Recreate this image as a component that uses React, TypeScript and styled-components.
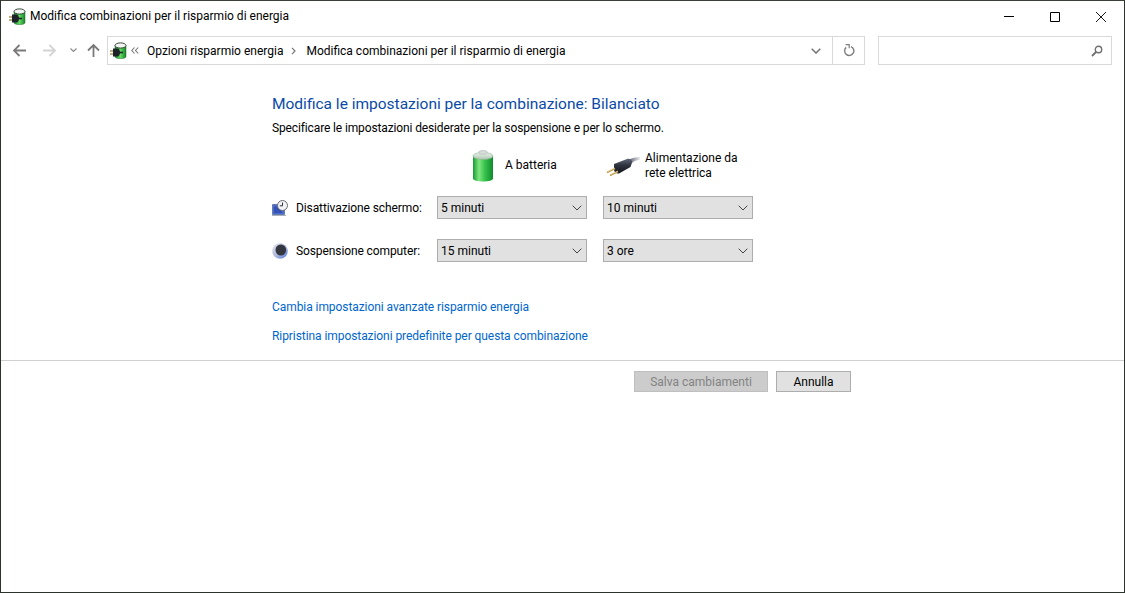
import React from 'react';
import styled, { createGlobalStyle } from 'styled-components';

const GlobalStyle = createGlobalStyle`
  html, body {
    margin: 0;
    padding: 0;
    background: #fff;
  }
  body {
    font-family: Roboto, "Open Sans", sans-serif;
    font-size: 12px;
    color: #000;
  }
`;

const Win = styled.div`
  box-sizing: border-box;
  width: 1125px;
  height: 593px;
  border: 1px solid #2c332c;
  border-top-color: #3a3f38;
  background: #fff;
  display: flex;
  flex-direction: column;
  overflow: hidden;
`;

const TitleBar = styled.div`
  height: 31px;
  display: flex;
  align-items: center;
  padding-left: 8px;
  flex-shrink: 0;
`;

const TitleText = styled.span`
  margin-left: 4px;
  padding-bottom: 2px;
  font-size: 12px;
  line-height: 16px;
  flex: 1;
`;

const WinButton = styled.div`
  width: 46px;
  height: 31px;
  display: flex;
  align-items: center;
  justify-content: center;
`;

const NavBar = styled.div`
  height: 29px;
  margin-top: 4px;
  display: flex;
  align-items: stretch;
  flex-shrink: 0;
`;

const NavButtons = styled.div`
  width: 106px;
  display: flex;
  align-items: center;
  padding-left: 12px;
  box-sizing: border-box;
`;

const NavIcon = styled.div<{ $w: number; $left?: number }>`
  width: ${(p) => p.$w}px;
  margin-left: ${(p) => p.$left ?? 0}px;
  height: 29px;
  display: flex;
  align-items: center;
  justify-content: center;
`;

const AddressBox = styled.div`
  box-sizing: border-box;
  width: 758px;
  border: 1px solid #d9d9d9;
  display: flex;
  align-items: center;
`;

const Crumbs = styled.div`
  flex: 1;
  display: flex;
  align-items: center;
  padding-left: 2px;
`;

const Crumb = styled.span<{ $left: number }>`
  margin-left: ${(p) => p.$left}px;
  font-size: 12px;
  white-space: nowrap;
`;

const CrumbMark = styled.span<{ $left: number }>`
  margin-left: ${(p) => p.$left}px;
  display: flex;
  align-items: center;
`;

const AddressAction = styled.div<{ $w: number; $line?: boolean }>`
  width: ${(p) => p.$w}px;
  height: 100%;
  display: flex;
  align-items: center;
  justify-content: center;
  border-left: ${(p) => (p.$line ? '1px solid #d9d9d9' : 'none')};
  box-sizing: border-box;
`;

const SearchBox = styled.div`
  box-sizing: border-box;
  width: 234px;
  margin-left: 13px;
  border: 1px solid #d9d9d9;
  display: flex;
  align-items: center;
  justify-content: flex-end;
  padding-right: 8px;
`;

const Content = styled.div`
  padding: 29px 0 0 271px;
  flex-shrink: 0;
`;

const Heading = styled.h1`
  margin: 0;
  font-size: 15.5px;
  font-weight: 400;
  line-height: 20px;
  color: #0a4aa8;
`;

const Lead = styled.p`
  margin: 6px 0 0;
  font-size: 12px;
  line-height: 16px;
  letter-spacing: -0.13px;
`;

const PowerGrid = styled.div`
  display: grid;
  grid-template-columns: 149px 150px 150px;
  column-gap: 16px;
  row-gap: 20px;
  margin-top: 14px;
`;

const HeadCell = styled.div<{ $pad: number; $gap: number }>`
  height: 31px;
  margin-bottom: -5px;
  display: flex;
  align-items: center;
  padding-left: ${(p) => p.$pad}px;
  gap: ${(p) => p.$gap}px;
  font-size: 12px;
  line-height: 15px;
`;

const RowLabel = styled.div`
  display: flex;
  align-items: center;
  gap: 8px;
  font-size: 12px;
  height: 23px;
  white-space: nowrap;
  letter-spacing: -0.1px;

  svg {
    flex-shrink: 0;
  }
`;

const Select = styled.div`
  box-sizing: border-box;
  height: 23px;
  background: #e1e1e1;
  border: 1px solid #adadad;
  display: flex;
  align-items: center;
  justify-content: space-between;
  padding: 0 4px 0 3px;
  font-size: 12px;
`;

const LinkList = styled.div`
  display: flex;
  flex-direction: column;
  gap: 13px;
  margin-top: 37px;
`;

const TaskLink = styled.a`
  font-size: 12px;
  line-height: 16px;
  letter-spacing: -0.07px;
  color: #0066cc;
  text-decoration: none;
`;

const Divider = styled.div`
  height: 1px;
  background: #d0d0d0;
  margin-top: 16px;
  flex-shrink: 0;
`;

const ButtonRow = styled.div`
  display: flex;
  gap: 8px;
  padding: 10px 0 0 633px;
`;

const Btn = styled.div<{ $disabled?: boolean; $w: number }>`
  box-sizing: border-box;
  width: ${(p) => p.$w}px;
  height: 21px;
  display: flex;
  align-items: center;
  justify-content: center;
  font-size: 12px;
  background: ${(p) => (p.$disabled ? '#cccccc' : '#e1e1e1')};
  border: 1px solid ${(p) => (p.$disabled ? '#bfbfbf' : '#adadad')};
  color: ${(p) => (p.$disabled ? '#838383' : '#000')};
`;

const PowerPlanIcon = ({ id }: { id: string }) => (
  <svg width="17" height="17" viewBox="0 0 17 17">
    <defs>
      <linearGradient id={id} x1="0" x2="1" y1="0" y2="0">
        <stop offset="0" stopColor="#1a8c32" />
        <stop offset="0.5" stopColor="#62d860" />
        <stop offset="1" stopColor="#148429" />
      </linearGradient>
    </defs>
    <path d="M5 3.500v11c0 1.300 2.200 2.200 5.500 2.200s5.500-.9 5.500-2.200v-11z" fill={`url(#${id})`} stroke="#2a6b33" strokeWidth=".5" />
    <ellipse cx="10.500" cy="3.500" rx="5.500" ry="2.600" fill="#f2f5f2" stroke="#38463a" />
    <path d="M0 9h4M0 12h4" stroke="#a89455" strokeWidth="1.300" />
    <path d="M3 6.500h4.200c1.700 0 2.800 1.700 2.800 4s-1.100 4-2.800 4H3z" fill="#1e2228" />
    <path d="M9.500 10.500h3.500" stroke="#1e2228" strokeWidth="1.600" />
  </svg>
);

const BatteryIcon = () => (
  <svg width="22" height="32" viewBox="0 0 22 32">
    <defs>
      <linearGradient id="bg" x1="0" x2="1" y1="0" y2="0">
        <stop offset="0" stopColor="#169a33" />
        <stop offset="0.3" stopColor="#7fe67f" />
        <stop offset="0.6" stopColor="#35c24c" />
        <stop offset="1" stopColor="#0f8a2c" />
      </linearGradient>
      <linearGradient id="bt" x1="0" x2="0" y1="0" y2="1">
        <stop offset="0" stopColor="#f2f5f2" />
        <stop offset="1" stopColor="#a9c4ad" />
      </linearGradient>
    </defs>
    <path d="M1 6v22.5c0 1.7 4.400 3 10 3s10-1.300 10-3V6z" fill="url(#bg)" />
    <ellipse cx="11" cy="6" rx="10" ry="3.600" fill="url(#bt)" stroke="#8fb495" strokeWidth=".6" />
    <path d="M7 3.200V1.600C7 1 8.800.6 11 .6s4 .4 4 1v1.600c0 .7-1.800 1.100-4 1.100s-4-.4-4-1.100z" fill="#d6dcd8" stroke="#a5aea8" strokeWidth=".5" />
  </svg>
);

const PlugIcon = () => (
  <svg width="34" height="22" viewBox="0 0 34 22">
    <defs>
      <linearGradient id="pl" x1="0" x2="0" y1="0" y2="1">
        <stop offset="0" stopColor="#606778" />
        <stop offset="0.45" stopColor="#2e323e" />
        <stop offset="1" stopColor="#14161c" />
      </linearGradient>
      <linearGradient id="cb" x1="0" x2="1" y1="0" y2="0">
        <stop offset="0" stopColor="#4c5260" />
        <stop offset="1" stopColor="#eceef0" />
      </linearGradient>
    </defs>
    <path d="M22 5c4-2 7.500-2.800 12-3v3c-4 .2-6.500 1.300-8.500 3.500z" fill="url(#cb)" />
    <path d="M8 9 21 4c3-.7 5.500.8 5 3.500L24.500 12 13 18.500c-2.500.4-4.200-.8-5-3.500z" fill="url(#pl)" />
    <path d="M9 13.500 1 17.500M12 16.500 4 20.500" stroke="#bd9a4e" strokeWidth="1.800" />
    <path d="M9 13 1.500 16.700M12 16 4.500 19.700" stroke="#f2e0a8" strokeWidth=".6" />
  </svg>
);

const ScreenIcon = () => (
  <svg width="16" height="16" viewBox="0 0 16 16">
    <path d="M.5 4.500h12v10H.5z" fill="#4a6cd0" stroke="#6a7da8" />
    <path d="M2 6.500h8V13H2z" fill="#3552b8" />
    <path d="M0 15.500h14" stroke="#a8b0c0" />
    <circle cx="10.500" cy="5.500" r="5" fill="#f1f2f3" stroke="#6a6e74" />
    <path d="M10.500 2.500v3.300H7.800" fill="none" stroke="#30343a" />
  </svg>
);

const SleepIcon = () => (
  <svg width="16" height="16" viewBox="0 0 16 16">
    <defs>
      <linearGradient id="sl" x1="0" x2="1" y1="0" y2="1">
        <stop offset="0" stopColor="#e4e6ea" />
        <stop offset="0.55" stopColor="#a9b6d8" />
        <stop offset="1" stopColor="#4f78e0" />
      </linearGradient>
    </defs>
    <circle cx="8" cy="8" r="7.800" fill="url(#sl)" />
    <ellipse cx="8.800" cy="7" rx="5.300" ry="5.600" fill="#34373f" />
  </svg>
);

const Arrow = ({ dir, color }: { dir: 'left' | 'right' | 'up'; color: string }) => {
  const d = {
    left: 'M1 6.500h12M6.500 1 1 6.500 6.500 12',
    right: 'M12 6.500H0M6.500 1 12 6.500 6.500 12',
    up: 'M6.500 13V1M1 6.500 6.500 1 12 6.500',
  }[dir];
  return (
    <svg width="13" height="13" viewBox="0 0 13 13">
      <path d={d} fill="none" stroke={color} strokeWidth="1.8" />
    </svg>
  );
};

const Chevron = ({ color = '#555', w = 9, sw = 1 }: { color?: string; w?: number; sw?: number }) => (
  <svg width={w} height={w * 0.6} viewBox="0 0 10 6">
    <path d="M.7.7 5 5l4.300-4.300" fill="none" stroke={color} strokeWidth={sw} />
  </svg>
);

const Combo = ({ value }: { value: string }) => (
  <Select>
    <span>{value}</span>
    <Chevron w={10} color="#444" />
  </Select>
);

export default function App() {
  return (
    <>
      <GlobalStyle />
      <Win>
        <TitleBar>
          <PowerPlanIcon id="pt" />
          <TitleText>Modifica combinazioni per il risparmio di energia</TitleText>
          <WinButton>
            <svg width="10" height="10" viewBox="0 0 10 10">
              <path d="M0 4.500h10" stroke="#000" />
            </svg>
          </WinButton>
          <WinButton>
            <svg width="10" height="10" viewBox="0 0 10 10">
              <path d="M.5.500h9v9h-9z" fill="none" stroke="#000" />
            </svg>
          </WinButton>
          <WinButton>
            <svg width="10" height="10" viewBox="0 0 10 10">
              <path d="M0 0l10 10M10 0 0 10" stroke="#000" strokeWidth=".9" />
            </svg>
          </WinButton>
        </TitleBar>
        <NavBar>
          <NavButtons>
            <NavIcon $w={13}>
              <Arrow dir="left" color="#7a7a7a" />
            </NavIcon>
            <NavIcon $w={13} $left={17}>
              <Arrow dir="right" color="#d4d4d4" />
            </NavIcon>
            <NavIcon $w={8} $left={13}>
              <Chevron w={7} color="#8a8a8a" sw={1.6} />
            </NavIcon>
            <NavIcon $w={13} $left={10}>
              <Arrow dir="up" color="#7a7a7a" />
            </NavIcon>
          </NavButtons>
          <AddressBox>
            <Crumbs>
              <PowerPlanIcon id="pa" />
              <CrumbMark $left={4}>
                <svg width="8" height="7" viewBox="0 0 8 7">
                  <path d="M3.500.500.800 3.500l2.700 3M7.200.500 4.500 3.500l2.700 3" fill="none" stroke="#777" strokeWidth="1.100" />
                </svg>
              </CrumbMark>
              <Crumb $left={8}>Opzioni risparmio energia</Crumb>
              <CrumbMark $left={8}>
                <svg width="5" height="8" viewBox="0 0 5 8">
                  <path d="M1 .800 4 4 1 7.200" fill="none" stroke="#777" strokeWidth="1.200" />
                </svg>
              </CrumbMark>
              <Crumb $left={10}>Modifica combinazioni per il risparmio di energia</Crumb>
            </Crumbs>
            <AddressAction $w={32}>
              <Chevron w={10} color="#777" sw={1.6} />
            </AddressAction>
            <AddressAction $w={32} $line>
              <svg width="12" height="13" viewBox="0 0 12 13">
                <path d="M3.200 3.400A4.600 4.600 0 1 0 8 2.600" fill="none" stroke="#7d7d7d" strokeWidth="1.400" />
                <path d="M2.600.600h3.600v3.600" fill="none" stroke="#7d7d7d" strokeWidth="1.200" />
              </svg>
            </AddressAction>
          </AddressBox>
          <SearchBox>
            <svg width="12" height="12" viewBox="0 0 12 12">
              <circle cx="7.500" cy="4.500" r="3.200" fill="none" stroke="#6f6f6f" strokeWidth="1.400" />
              <path d="M5 7 1 11" stroke="#6f6f6f" strokeWidth="1.800" />
            </svg>
          </SearchBox>
        </NavBar>
        <Content>
          <Heading>Modifica le impostazioni per la combinazione: Bilanciato</Heading>
          <Lead>Specificare le impostazioni desiderate per la sospensione e per lo schermo.</Lead>
          <PowerGrid>
            <div />
            <HeadCell $pad={35} $gap={11}>
              <BatteryIcon />
              <span>A batteria</span>
            </HeadCell>
            <HeadCell $pad={3} $gap={5}>
              <PlugIcon />
              <span>
                Alimentazione da
                <br />
                rete elettrica
              </span>
            </HeadCell>
            <RowLabel>
              <ScreenIcon />
              Disattivazione schermo:
            </RowLabel>
            <Combo value="5 minuti" />
            <Combo value="10 minuti" />
            <RowLabel>
              <SleepIcon />
              Sospensione computer:
            </RowLabel>
            <Combo value="15 minuti" />
            <Combo value="3 ore" />
          </PowerGrid>
          <LinkList>
            <TaskLink>Cambia impostazioni avanzate risparmio energia</TaskLink>
            <TaskLink>Ripristina impostazioni predefinite per questa combinazione</TaskLink>
          </LinkList>
        </Content>
        <Divider />
        <ButtonRow>
          <Btn $disabled $w={134}>
            Salva cambiamenti
          </Btn>
          <Btn $w={75}>Annulla</Btn>
        </ButtonRow>
      </Win>
    </>
  );
}
